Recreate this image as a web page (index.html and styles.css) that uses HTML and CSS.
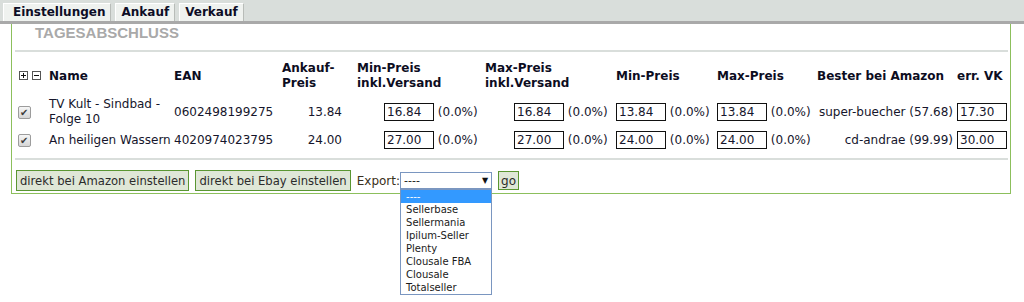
FILE: index.html
```html
<!DOCTYPE html>
<html>
<head>
    <title>Verkauf - Tagesabschluss</title>
    <link rel="stylesheet" href="styles.css">
</head>
<body>
    <div class="tabs">
        <span class="tab first">Einstellungen</span>
        <span class="tab">Ankauf</span>
        <span class="tab active">Verkauf</span>
    </div>

    <div class="box">
        <h2 class="box-title">TAGESABSCHLUSS</h2>
        <div class="rule"></div>

        <table class="list">
            <colgroup>
                <col class="c-check">
                <col class="c-name">
                <col class="c-ean">
                <col class="c-buy">
                <col class="c-min-ship">
                <col class="c-max-ship">
                <col class="c-min">
                <col class="c-max">
                <col class="c-best">
                <col class="c-vk">
            </colgroup>
            <tr>
                <th class="toggles">
                    <svg class="toggle" width="9" height="9" viewBox="0 0 9 9"><rect x="0.5" y="0.5" width="8" height="8" fill="#fff" stroke="#555"/><path d="M2 4.5h5M4.5 2v5" stroke="#111"/></svg>
                    <svg class="toggle" width="9" height="9" viewBox="0 0 9 9"><rect x="0.5" y="0.5" width="8" height="8" fill="#fff" stroke="#555"/><path d="M2 4.5h5" stroke="#111"/></svg>
                </th>
                <th>Name</th>
                <th>EAN</th>
                <th>Ankauf-<br>Preis</th>
                <th>Min-Preis<br>inkl.Versand</th>
                <th>Max-Preis<br>inkl.Versand</th>
                <th>Min-Preis</th>
                <th>Max-Preis</th>
                <th>Bester bei Amazon</th>
                <th>err. VK</th>
            </tr>
            <tr>
                <td><input type="checkbox" class="check" checked></td>
                <td>TV Kult - Sindbad - Folge 10</td>
                <td>0602498199275</td>
                <td class="buy">13.84</td>
                <td class="min-ship"><input class="num" value="16.84"> (0.0%)</td>
                <td class="max-ship"><input class="num" value="16.84"> (0.0%)</td>
                <td><input class="num" value="13.84"> (0.0%)</td>
                <td><input class="num" value="13.84"> (0.0%)</td>
                <td class="best">super-buecher (57.68)</td>
                <td><input class="num" value="17.30"></td>
            </tr>
            <tr>
                <td><input type="checkbox" class="check" checked></td>
                <td>An heiligen Wassern</td>
                <td>4020974023795</td>
                <td class="buy">24.00</td>
                <td class="min-ship"><input class="num" value="27.00"> (0.0%)</td>
                <td class="max-ship"><input class="num" value="27.00"> (0.0%)</td>
                <td><input class="num" value="24.00"> (0.0%)</td>
                <td><input class="num" value="24.00"> (0.0%)</td>
                <td class="best">cd-andrae (99.99)</td>
                <td><input class="num" value="30.00"></td>
            </tr>
        </table>

        <div class="rule rule-bottom"></div>

        <div class="actions">
            <button class="btn">direkt bei Amazon einstellen</button>
            <button class="btn">direkt bei Ebay einstellen</button>
            <span class="export-label">Export:</span>
            <div class="select">
                <span>----</span>
                <span class="arrow">&#9660;</span>
                <ul class="options">
                    <li class="selected">----</li>
                    <li>Sellerbase</li>
                    <li>Sellermania</li>
                    <li>Ipilum-Seller</li>
                    <li>Plenty</li>
                    <li>Clousale FBA</li>
                    <li>Clousale</li>
                    <li>Totalseller</li>
                </ul>
            </div>
            <button class="btn go">go</button>
        </div>
    </div>
</body>
</html>
```

FILE: styles.css
```css
html{
    height: 100%;
}

body{
    margin: 0;
    min-height: 100%;
    background-color: white;
    color: #16162c;
    font-family: "DejaVu Sans", Verdana, sans-serif;
    font-size: 12px;
}

.tabs{
    display: flex;
    gap: 4px;
    height: 24px;
    box-sizing: border-box;
    padding: 3px 0 0 3px;
    background-color: #d9dedb;
    border-bottom: 3px solid #a9a9a9;
}

.tab{
    padding: 0 5px 0 5px;
    line-height: 17px;
    background-color: #eff2ef;
    border-top: 1px solid white;
    border-left: 1px solid white;
    border-right: 1px solid #b8bcb8;
    font-weight: bold;
    color: #0d0d26;
}

.tab.first{
    padding-left: 9px;
}

.box{
    margin-left: 11px;
    width: 993px;
    padding: 0 2px 2px 3px;
    border: 1px solid #8cbf5c;
    border-top: 0;
}

.box-title{
    margin: 0;
    padding: 1px 0 0 20px;
    font-family: "Liberation Sans", Arial, sans-serif;
    font-size: 15px;
    line-height: 15px;
    font-weight: bold;
    color: #a9a9a9;
}

.rule{
    height: 2px;
    margin-top: 10px;
    background-color: #d9dedb;
}

.rule-bottom{
    margin-top: 7px;
}

.list{
    margin: 7px 0 0 3px;
    width: 990px;
    table-layout: fixed;
    border-collapse: collapse;
}

.c-check{ width: 31px; }
.c-name{ width: 125px; }
.c-ean{ width: 108px; }
.c-buy{ width: 75px; }
.c-min-ship{ width: 128px; }
.c-max-ship{ width: 131px; }
.c-min{ width: 101px; }
.c-max{ width: 100px; }
.c-best{ width: 140px; }
.c-vk{ width: 51px; }

.list th,
.list td{
    padding: 2px 0;
    line-height: 15px;
    vertical-align: middle;
    text-align: left;
    white-space: nowrap;
}

.list th{
    padding-bottom: 4px;
    font-weight: bold;
    color: #0d0d1f;
}

.list td:nth-child(2){
    white-space: normal;
}

.toggles{
    font-size: 0;
}

.toggle{
    margin-left: 1px;
    margin-right: 3px;
    vertical-align: middle;
}

.buy{
    text-align: right !important;
    padding-right: 15px !important;
}

.min-ship{
    padding-left: 27px !important;
}

.max-ship{
    padding-left: 29px !important;
}

.best{
    text-align: right !important;
    padding-right: 4px !important;
}

.num{
    width: 50px;
    height: 18px;
    box-sizing: border-box;
    margin: 0;
    padding: 0 2px;
    border: 1px solid #111;
    font-family: "DejaVu Sans", Verdana, sans-serif;
    font-size: 12px;
    color: #16162c;
    vertical-align: middle;
}

.check{
    appearance: none;
    position: relative;
    width: 13px;
    height: 13px;
    margin: 0;
    border: 1px solid #9c9c9c;
    border-radius: 2px;
    background: linear-gradient(#f6f6f6, #d6d6d6);
    vertical-align: middle;
}

.check:checked::after{
    content: "\2714";
    position: absolute;
    left: 1px;
    top: -1px;
    font-size: 10px;
    line-height: 13px;
    color: #3c3c3c;
}

.actions{
    display: flex;
    align-items: center;
    margin-top: 10px;
    padding-left: 1px;
}

.btn{
    height: 21px;
    margin: 0 6px 0 0;
    padding: 0 3px;
    border: 1px solid #5a9632;
    background-color: #dfe7d7;
    font-family: "DejaVu Sans", Verdana, sans-serif;
    font-size: 11.6px;
    color: #2b2b2b;
}

.btn.go{
    height: 19px;
    margin-left: 6px;
    padding: 0 2px;
    font-size: 12px;
}

.export-label{
    color: #3a3020;
}

.select{
    position: relative;
    display: flex;
    justify-content: space-between;
    align-items: center;
    width: 92px;
    height: 17px;
    box-sizing: border-box;
    padding: 0 3px 0 3px;
    border: 1px solid #7a96c0;
    background-color: white;
    font-size: 11px;
    color: #111;
}

.arrow{
    font-size: 8px;
}

.options{
    position: absolute;
    left: -1px;
    top: 16px;
    width: 92px;
    box-sizing: border-box;
    margin: 0;
    padding: 0;
    list-style: none;
    border: 1px solid #7a96c0;
    background-color: white;
}

.options li{
    height: 13px;
    padding-left: 5px;
    line-height: 13px;
    font-size: 10px;
    color: #1a1a1a;
}

.options li.selected{
    background-color: #3399ff;
    color: white;
}
```
